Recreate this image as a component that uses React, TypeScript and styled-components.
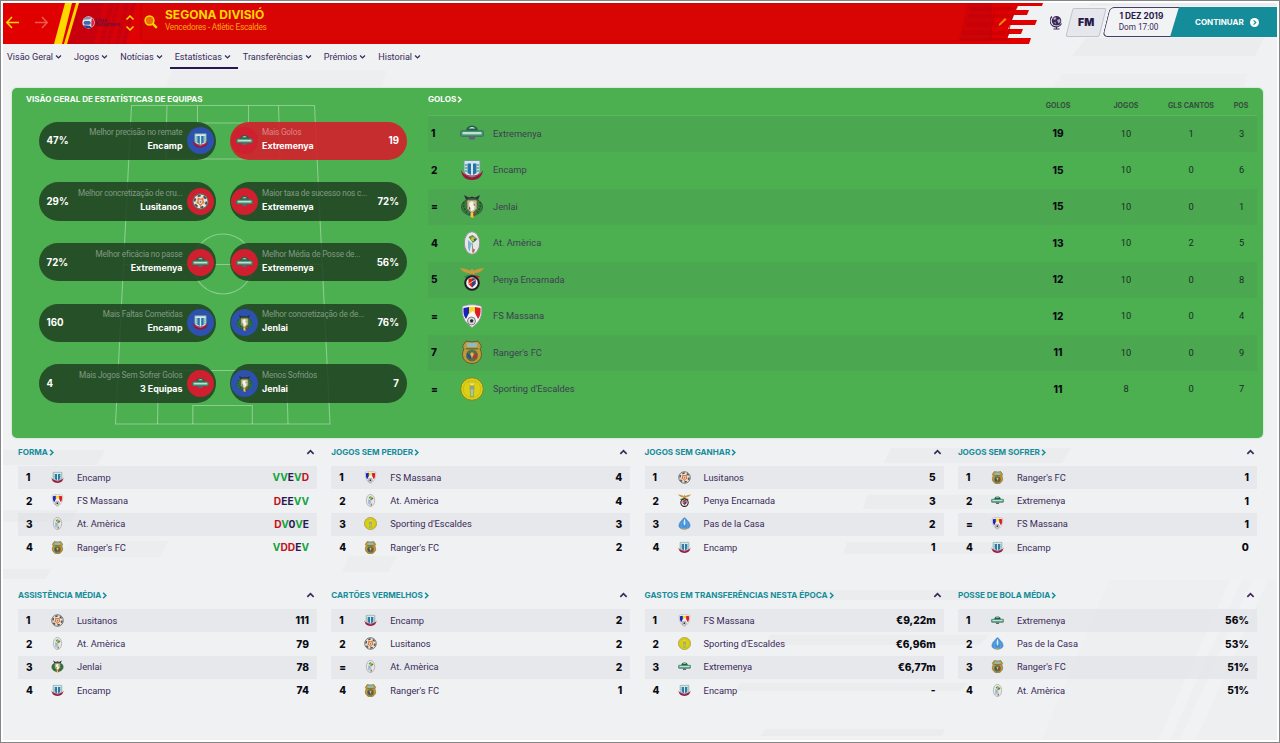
import React from "react";
import styled, { createGlobalStyle, css } from "styled-components";

const Colors = {
  Red: "#e10000",
  Yellow: "#ffd800",
  Green: "#4caf50",
  Teal: "#148c99",
  Purple: "#3b2a58",
  Black: "#0a0a12",
  Background: "#eff1f3",
};

const TEXT_FONT = 'Roboto, "Liberation Sans", sans-serif';
const BOLD_FONT = 'Inter, "Liberation Sans", sans-serif';

type Club =
  | "Extremenya"
  | "Encamp"
  | "Jenlai"
  | "At. Amèrica"
  | "Penya Encarnada"
  | "FS Massana"
  | "Ranger's FC"
  | "Sporting d'Escaldes"
  | "Lusitanos"
  | "Pas de la Casa";

const crests: Record<Club, React.ReactNode> = {
  Extremenya: (
    <>
      <path d="M6 10a6 5.500 0 0 1 12 0z" fill="#1d5f48" />
      <path d="M8.500 7.500a4 3 0 0 1 7 0z" fill="#d9ead9" />
      <rect x=".5" y="9.500" width="23" height="6" rx="1.500" fill="#3f9270" stroke="#3d6f5c" strokeWidth=".7" />
      <rect x="2.500" y="11" width="19" height="2.400" fill="#c3dfce" />
      <path d="M8.500 15.500h7l-1 3h-5z" fill="#625f80" />
    </>
  ),
  Encamp: (
    <>
      <path d="M1 12c1.500 3 2.500 4 5 4h12c2.500 0 3.500-1 5-4-.5 6-4 10-11 10S1.500 18 1 12z" fill="#98173c" />
      <path d="M4 2.500h16v10c0 4-4 5.500-8 6.500-4-1-8-2.500-8-6.500z" fill="#d3e6ea" stroke="#6c9a96" />
      <path d="M7.500 5.500H11V17l-3.500-2zM13 5.500h3.500V15L13 17z" fill="#2674a8" />
      <path d="M6 6v9M18 6v9" stroke="#4aa083" strokeWidth="1.400" strokeDasharray="2 1" />
      <path d="M3 15c2 4 16 4 18 0" stroke="#c02b50" strokeWidth="1" fill="none" />
    </>
  ),
  Jenlai: (
    <>
      <path d="M4 1l5 2.500 3-1 3 1L20 1l-2 5H6z" fill="#2f343a" />
      <ellipse cx="12" cy="13" rx="10.500" ry="8.500" fill="#3a7c42" stroke="#2b5a34" />
      <path d="M4 8c-1 4 0 8 4 11M20 8c1 4 0 8-4 11" stroke="#1f4f2a" strokeWidth="1.500" strokeDasharray="2 1.200" fill="none" />
      <path d="M7 6h10v8.500L12 20l-5-5.500z" fill="#c9bd8e" stroke="#5a5736" strokeWidth=".7" />
      <path d="M9 9l3-2 3 3-1 6-3 1-1-3z" fill="#f4f2ea" />
      <path d="M9 13l1.500 1-1 2zM13.500 9l1.500 2-1 1z" fill="#3f3b33" />
      <path d="M8 19h3v4z" fill="#2547b8" />
      <path d="M10.500 19h3v5l-3-1z" fill="#f5cf1d" />
      <path d="M13.500 19H16l-2.500 4z" fill="#c9222b" />
    </>
  ),
  "At. Amèrica": (
    <>
      <ellipse cx="12" cy="12" rx="7.700" ry="11.300" fill="#e6e8e7" stroke="#93908f" />
      <path d="M8.500 6l4-2 5 4-4.500 4z" fill="#5c9440" />
      <circle cx="13" cy="8" r="2" fill="#dcc436" />
      <path d="M13.500 7.500l3 1-2 2z" fill="#2d5599" />
      <path d="M8 9l3.500 3-2 9-1.500-4z" fill="#7fb4da" />
      <path d="M12 12l1 9" stroke="#858b96" />
      <path d="M13 17.500l2 1-1 3h-2z" fill="#b66d46" />
    </>
  ),
  "Penya Encarnada": (
    <>
      <path d="M0 1c4 0 8 2 10.500 2.500L12 1.500l1.500 2C16 3 20 1 24 1c-2 3-5 5-9 5l-1 2h-4L9 6C5 6 2 4 0 1z" fill="#c99a3c" />
      <path d="M4 9l8-2 2 1-4 3H5z" fill="#2c8d4e" />
      <path d="M13 8l7 1-2 2h-5z" fill="#d02a33" />
      <circle cx="12" cy="16" r="6.800" fill="#f1f1f1" stroke="#1f1c22" strokeWidth="2" />
      <path d="M8.500 11.500h7v5.500L12 20.500 8.500 17z" fill="#d3222d" />
      <path d="M12 11.500h3.500V17L12 20.500z" fill="#39408c" />
      <path d="M8.500 17l7-4.500" stroke="#e8d23c" />
    </>
  ),
  "FS Massana": (
    <>
      <path d="M2.500 2.500c3-1.200 5.500-1.700 9.500-1.700s6.500.500 9.500 1.700c1 8.500-1 15-9.500 21C3.500 17.500 1.500 11 2.500 2.500z" fill="#f7f7f7" stroke="#9a97a4" strokeWidth=".8" />
      <path d="M3.500 4L9 3v6l-3 6C3.500 12 3.200 8 3.500 4z" fill="#1c22b8" />
      <path d="M9 3h6v6l-2.500-2L9 10z" fill="#f1dd25" />
      <path d="M15 3l5.500 1c.3 4 0 8-2.500 11l-3-6z" fill="#e01b22" />
      <circle cx="11.500" cy="17" r="4" fill="#dadada" stroke="#555" strokeWidth=".7" />
      <path d="M10 16l2-1 1.500 1.500-1 2h-2z" fill="#26262c" />
    </>
  ),
  "Ranger's FC": (
    <>
      <path d="M6 1c4 1 8 1 12 0l3.500 5L20 9c4 7-.5 14.500-8 14.500S0 16 4 9L2.500 6z" fill="#bf9a38" stroke="#6c5a28" />
      <path d="M7 3h10v4H7z" fill="#86bccc" />
      <path d="M6 8h12v1.500H6z" fill="#6c6d35" />
      <circle cx="12" cy="15.500" r="6" fill="#5a7046" />
      <path d="M7 12.500l4 2.500v4.500l-3.500-2z" fill="#2c4f91" />
      <path d="M17 12.500L13 15v4.500l3.500-2z" fill="#b23a2c" />
      <path d="M10 14l2-2 2 2-2 4z" fill="#dfb64a" />
    </>
  ),
  "Sporting d'Escaldes": (
    <>
      <circle cx="12" cy="12" r="11.300" fill="#ddd015" stroke="#7f8426" />
      <circle cx="12" cy="12" r="8.700" fill="none" stroke="#c0b416" strokeWidth=".7" />
      <path d="M8.500 4.500l3 1.500h1l3-1.500-1.500 4h-4z" fill="#f1e95a" stroke="#b49b1c" strokeWidth=".5" />
      <path d="M10 9.500h4l-.5 10h-3z" fill="#b5c490" stroke="#6e9a45" strokeWidth=".6" />
      <path d="M10 10h4v2.500h-4z" fill="#8f9cab" />
    </>
  ),
  Lusitanos: (
    <>
      <circle cx="12" cy="12" r="10.700" fill="#e6e4e2" stroke="#6a6462" strokeWidth="1.600" />
      <circle cx="12" cy="12" r="8.300" fill="none" stroke="#55504d" strokeWidth="2.800" strokeDasharray="4.500 4" />
      <path d="M8 6.500l4 1.500 4-1.500.500 5L18 14l-3.500 1.500L12 19l-2.500-3.500L6 14l1.500-2.500z" fill="#e2762a" />
      <path d="M9.500 9.500h5v4.500L12 16l-2.500-2z" fill="#e9dcca" />
      <path d="M11 11h2v3h-2z" fill="#6e87ae" />
    </>
  ),
  "Pas de la Casa": (
    <>
      <path d="M12 1c2.500 1.500 4 3 5 5 4 3 5.500 7 5.500 10.500-1 4-5 6-10.500 6S2.500 21 1.500 17C1.500 13 3 9 7 6c1-2 2.500-3.500 5-5z" fill="#4392dc" stroke="#7d9bb5" />
      <path d="M12 3c2 4 2 8 1 12h-2C10 11 10 7 12 3z" fill="#dcebf7" />
      <path d="M8 9c-3 4-3 8-1 11M16 9c3 4 3 8 1 11" stroke="#7bb6ec" fill="none" />
      <path d="M8 20h8l-1 3H9z" fill="#a9a45a" />
    </>
  ),
};

const Crest = ({ club, size }: { club: Club; size: number }) => (
  <svg width={size} height={size} viewBox="0 0 24 24">
    {crests[club]}
  </svg>
);

const menu = ["Visão Geral", "Jogos", "Notícias", "Estatísticas", "Transferências", "Prémios", "Historial"];

type Stat = { label: string; team: string; club: Club; value: string; bg: "red" | "blue"; active?: boolean };

const leftStats: Stat[] = [
  { label: "Melhor precisão no remate", team: "Encamp", club: "Encamp", value: "47%", bg: "blue" },
  { label: "Melhor concretização de cru...", team: "Lusitanos", club: "Lusitanos", value: "29%", bg: "red" },
  { label: "Melhor eficácia no passe", team: "Extremenya", club: "Extremenya", value: "72%", bg: "red" },
  { label: "Mais Faltas Cometidas", team: "Encamp", club: "Encamp", value: "160", bg: "blue" },
  { label: "Mais Jogos Sem Sofrer Golos", team: "3 Equipas", club: "Extremenya", value: "4", bg: "red" },
];

const rightStats: Stat[] = [
  { label: "Mais Golos", team: "Extremenya", club: "Extremenya", value: "19", bg: "red", active: true },
  { label: "Maior taxa de sucesso nos c...", team: "Extremenya", club: "Extremenya", value: "72%", bg: "red" },
  { label: "Melhor Média de Posse de...", team: "Extremenya", club: "Extremenya", value: "56%", bg: "red" },
  { label: "Melhor concretização de de...", team: "Jenlai", club: "Jenlai", value: "76%", bg: "blue" },
  { label: "Menos Sofridos", team: "Jenlai", club: "Jenlai", value: "7", bg: "blue" },
];

const goals: [string, Club, number, number, number, number][] = [
  ["1", "Extremenya", 19, 10, 1, 3],
  ["2", "Encamp", 15, 10, 0, 6],
  ["=", "Jenlai", 15, 10, 0, 1],
  ["4", "At. Amèrica", 13, 10, 2, 5],
  ["5", "Penya Encarnada", 12, 10, 0, 8],
  ["=", "FS Massana", 12, 10, 0, 4],
  ["7", "Ranger's FC", 11, 10, 0, 9],
  ["=", "Sporting d'Escaldes", 11, 8, 0, 7],
];

type Ranking = { title: string; form?: boolean; rows: [string, Club, string][] };

const rankings: Ranking[] = [
  {
    title: "FORMA",
    form: true,
    rows: [["1", "Encamp", "VVEVD"], ["2", "FS Massana", "DEEVV"], ["3", "At. Amèrica", "DV0VE"], ["4", "Ranger's FC", "VDDEV"]],
  },
  {
    title: "JOGOS SEM PERDER",
    rows: [["1", "FS Massana", "4"], ["2", "At. Amèrica", "4"], ["3", "Sporting d'Escaldes", "3"], ["4", "Ranger's FC", "2"]],
  },
  {
    title: "JOGOS SEM GANHAR",
    rows: [["1", "Lusitanos", "5"], ["2", "Penya Encarnada", "3"], ["3", "Pas de la Casa", "2"], ["4", "Encamp", "1"]],
  },
  {
    title: "JOGOS SEM SOFRER",
    rows: [["1", "Ranger's FC", "1"], ["2", "Extremenya", "1"], ["=", "FS Massana", "1"], ["4", "Encamp", "0"]],
  },
  {
    title: "ASSISTÊNCIA MÉDIA",
    rows: [["1", "Lusitanos", "111"], ["2", "At. Amèrica", "79"], ["3", "Jenlai", "78"], ["4", "Encamp", "74"]],
  },
  {
    title: "CARTÕES VERMELHOS",
    rows: [["1", "Encamp", "2"], ["2", "Lusitanos", "2"], ["=", "At. Amèrica", "2"], ["4", "Ranger's FC", "1"]],
  },
  {
    title: "GASTOS EM TRANSFERÊNCIAS NESTA ÉPOCA",
    rows: [["1", "FS Massana", "€9,22m"], ["2", "Sporting d'Escaldes", "€6,96m"], ["3", "Extremenya", "€6,77m"], ["4", "Encamp", "-"]],
  },
  {
    title: "POSSE DE BOLA MÉDIA",
    rows: [["1", "Extremenya", "56%"], ["2", "Pas de la Casa", "53%"], ["3", "Ranger's FC", "51%"], ["4", "At. Amèrica", "51%"]],
  },
];

const Chevron = ({ dir, size = 7, width = 1.6 }: { dir: "up" | "down" | "right"; size?: number; width?: number }) => {
  const d = { up: "M1.500 6.500L5 3l3.500 3.500", down: "M1.500 3.500L5 7l3.500-3.500", right: "M3 1L7 5 3 9" }[dir];
  return (
    <svg width={size} height={size} viewBox="0 0 10 10">
      <path d={d} fill="none" stroke="currentColor" strokeWidth={(width * 10) / size} />
    </svg>
  );
};

const PageBackdrop = () => (
  <Backdrop width="1274" height="737" viewBox="3 3 1274 737">
    <g fill="#ebecee">
      <path d="M1090 3h187v3H1089zM1086 38h178l-9 18H1072z" />
      <path d="M1062 74h186l-5 14h-190z" opacity=".6" />
      <path d="M172 70h214l-5 18H166z" opacity=".5" />
      <path d="M3 450h102l-8 15H3zM3 510h75l-7 12H3zM3 569h48l-6 10H3z" />
      <path d="M70 541h98l-8 16H60zM349 556h48l-9 16h-46z" opacity=".8" />
      <path d="M891 448h180l-9 15H884zM867 495h190l-7 14H863zM847 542h190l-5 12H843z" />
      <path d="M800 590h210l-6 10H795zM770 635h218l-8 10H766zM740 683h228l-7 8H736zM765 729h180l-3 7H760z" />
      <path d="M1042 740l68-160h167v160z" opacity=".55" />
    </g>
    <g fill="#f1f2f4">
      <path d="M1158 740l72-160h12l-72 160zM1180 740l72-160h16l-72 160z" />
    </g>
  </Backdrop>
);

const HeaderArt = () => (
  <ArtSvg width="1050" height="41" viewBox="3 3 1050 41">
    <path
      d="M3 3h1040l-1 3h-24l-2 4h13l-2 5h-13l-2 5h25l-2 5h-25l-2 4h15l-2 5h-12l-2 4h24l-2 6H3z"
      fill={Colors.Red}
    />
    <path d="M79 3h62v41H68z" fill="#c8000d" />
    <g fill="#df0205">
      <path d="M94 44L104 3h5L99 44zM104 44L114 3h2l-10 41zM110 44L120 3h5l-10 41zM119 44L129 3h3l-10 41z" opacity=".6" />
      <path d="M126 44l10-41h5v41z" />
    </g>
    <path d="M141 3h850v36a2 2 0 0 1-2 2H143a2 2 0 0 1-2-2z" fill="#d90404" stroke="#bd0007" strokeWidth=".8" />
    <g fill="#bd0209">
      <path d="M971 7h42l-1 4h-43zM969 14h44l-1 4h-44zM967 22h38l-2 5h-37zM963 31h43l-1 4h-43zM960 38h50l-1 3h-50z" opacity=".5" />
      <path d="M968 3h23v38h-32z" opacity=".35" />
    </g>
    <path d="M995 8h19l-7 31h-17z" fill="none" stroke="#ba0007" strokeWidth=".8" />
    <path d="M65 3h7L62 44h-8z" fill={Colors.Yellow} />
    <path d="M76 3h3L67 44h-3z" fill={Colors.Yellow} />
    <path d="M998.500 26l.7-2.300 5.800-5.700 1.500 1.400-5.800 5.700z" fill="#f58a07" />
  </ArtSvg>
);

const Arrow = ({ flip }: { flip?: boolean }) => (
  <svg width="13" height="13" viewBox="0 0 13 13">
    <path
      d={flip ? "M0 6.500h12M7 1l5.200 5.500L7 12" : "M13 6.500H1M6 1L.8 6.500 6 12"}
      fill="none"
      stroke={flip ? "#ee5a4c" : Colors.Yellow}
      strokeWidth="1.500"
    />
  </svg>
);

const LeagueLogo = () => (
  <svg width="13" height="13" viewBox="0 0 12 12">
    <circle cx="6" cy="6" r="5.700" fill="#e4e6ef" />
    <path d="M1 3.500a5.700 5.700 0 0 1 8-2L7 3z" fill="#8b8ba6" />
    <path d="M9 1.500a5.700 5.700 0 0 1 0 9L8.500 8z" fill="#e21f31" />
    <path d="M1 8.500a5.700 5.700 0 0 0 8 2L7 9z" fill="#27458e" />
    <rect x="1.500" y="4.500" width="6.500" height="3.500" rx="1.500" fill="#4068aa" />
  </svg>
);

const Globe = () => (
  <svg width="13" height="15" viewBox="0 0 13 15">
    <circle cx="6.500" cy="5.800" r="4.800" fill={Colors.Purple} />
    <path d="M3 4l2-2 1.500 1L5 5zM7 5l3-1 .5 2.500-2 2zM4 7l2 .5L5.500 9z" fill="#b5b1c3" />
    <path d="M2 1.500a6 6 0 1 0 9.500 7M6.500 11.500V14M3.500 14h6" fill="none" stroke={Colors.Purple} strokeWidth="1.100" />
  </svg>
);

const Pitch = () => (
  <PitchSvg width="218" height="322" viewBox="114 104 218 322">
    <g fill="none" stroke="#fff" strokeOpacity=".36" strokeWidth="1.100">
      <path d="M131.500 105.500h183L330 424H115.500z" />
      <path d="M167 105.500L165.500 159h114.500L278.500 105.500M197.500 105.500V123h51v-17.500" />
      <path d="M123.500 264.500h198" />
      <circle cx="223" cy="264" r="30" />
      <path d="M157.500 424l1-53.500h128l1.500 53.500M192.800 424v-18.500h59.500V424" />
    </g>
  </PitchSvg>
);

const StatPill = ({ stat, right }: { stat: Stat; right?: boolean }) => (
  <Pill $right={right} $active={stat.active}>
    <PillValue>{stat.value}</PillValue>
    <PillText $right={right}>
      <PillLabel>{stat.label}</PillLabel>
      <PillTeam>{stat.team}</PillTeam>
    </PillText>
    <Badge $color={stat.bg}>
      <Crest club={stat.club} size={17} />
    </Badge>
  </Pill>
);

const App = () => {
  return (
    <Window>
      <GlobalStyle />
      <PageBackdrop />
      <Header>
        <HeaderArt />
        <History>
          <Arrow />
          <Arrow flip />
        </History>
        <League>
          <LeagueLogo />
          <LeagueName>
            Lliga
            <br />
            Biosphere
          </LeagueName>
        </League>
        <Switcher>
          <Chevron dir="up" size={10} width={1.500} />
          <Chevron dir="down" size={10} width={1.500} />
        </Switcher>
        <svg width="14" height="14" viewBox="0 0 14 14">
          <path d="M8.500 8.500l4.300 4.300" stroke={Colors.Yellow} strokeWidth="2.400" />
          <circle cx="5.500" cy="5.500" r="4.400" fill="#ef6b05" stroke={Colors.Yellow} strokeWidth="1.500" />
        </svg>
        <Heading>
          <Title>SEGONA DIVISIÓ</Title>
          <Subtitle>Vencedores - Atlètic Escaldes</Subtitle>
        </Heading>
        <Globe />
        <FmButton>
          <span>FM</span>
        </FmButton>
        <DateBox>
          <b>1 DEZ 2019</b>
          <span>Dom 17:00</span>
        </DateBox>
        <Continue>
          CONTINUAR
          <svg width="9" height="9" viewBox="0 0 9 9">
            <circle cx="4.500" cy="4.500" r="4.500" fill="#fff" />
            <path d="M3.600 2.300l2.200 2.200-2.200 2.200" fill="none" stroke={Colors.Teal} strokeWidth="1.200" />
          </svg>
        </Continue>
      </Header>
      <Menu>
        {menu.map((item) => (
          <MenuItem key={item} $active={item === "Estatísticas"}>
            {item}
            <Chevron dir="down" size={7} width={1.300} />
          </MenuItem>
        ))}
      </Menu>
      <Panel>
        <Overview>
          <Pitch />
          <PanelTitle>VISÃO GERAL DE ESTATÍSTICAS DE EQUIPAS</PanelTitle>
          <Pills>
            {leftStats.map((stat, i) => (
              <React.Fragment key={stat.label}>
                <StatPill stat={stat} />
                <StatPill stat={rightStats[i]} right />
              </React.Fragment>
            ))}
          </Pills>
        </Overview>
        <Goals>
          <GoalsHead>
            <GoalsTitle>
              GOLOS
              <Chevron dir="right" size={7} width={1.600} />
            </GoalsTitle>
            <Column>GOLOS</Column>
            <Column>JOGOS</Column>
            <Column>GLS CANTOS</Column>
            <Column $last>POS</Column>
          </GoalsHead>
          {goals.map(([rank, club, total, games, corners, pos]) => (
            <GoalsRow key={club}>
              <GoalRank>{rank}</GoalRank>
              <Crest club={club} size={24} />
              <GoalClub>{club}</GoalClub>
              <Total>{total}</Total>
              <Cell>{games}</Cell>
              <Cell>{corners}</Cell>
              <Cell $last>{pos}</Cell>
            </GoalsRow>
          ))}
        </Goals>
      </Panel>
      <Rankings>
        {rankings.map(({ title, form, rows }) => (
          <Card key={title}>
            <CardHead>
              <CardTitle>
                {title}
                <Chevron dir="right" size={7} width={1.500} />
              </CardTitle>
              <Chevron dir="up" size={9} width={1.700} />
            </CardHead>
            {rows.map(([rank, club, value]) => (
              <CardRow key={club}>
                <Rank>{rank}</Rank>
                <Crest club={club} size={13} />
                <ClubName>{club}</ClubName>
                <Value>
                  {form
                    ? value.split("").map((result, i) => (
                        <Result key={i} $result={result}>
                          {result}
                        </Result>
                      ))
                    : value}
                </Value>
              </CardRow>
            ))}
          </Card>
        ))}
      </Rankings>
    </Window>
  );
};

export default App;

const GlobalStyle = createGlobalStyle`
  body {
    margin: 0;
    font-family: ${TEXT_FONT};
    color: ${Colors.Purple};
  }
  * {
    box-sizing: border-box;
  }
  svg {
    display: block;
    flex: none;
  }
`;

const Window = styled.div`
  position: relative;
  z-index: 0;
  width: 1280px;
  height: 743px;
  overflow: hidden;
  background: ${Colors.Background};
  border: 1px solid #858585;
  box-shadow: inset 0 0 0 2px #fff;
  padding: 2px;
`;

const Backdrop = styled.svg`
  position: absolute;
  left: 2px;
  top: 2px;
  z-index: -2;
`;

const Header = styled.div`
  position: relative;
  display: flex;
  align-items: center;
  height: 41px;
  padding-bottom: 3px;
`;

const ArtSvg = styled.svg`
  position: absolute;
  left: 0;
  top: 0;
  z-index: -1;
`;

const History = styled.div`
  display: flex;
  gap: 16px;
  width: 79px;
  padding-left: 3px;
`;

const League = styled.div`
  display: flex;
  align-items: center;
  width: 43px;
`;

const LeagueName = styled.div`
  font-family: ${BOLD_FONT};
  font-size: 5px;
  font-weight: 700;
  line-height: 4px;
  color: #6d1038;
`;

const Switcher = styled.div`
  display: flex;
  flex-direction: column;
  width: 19px;
  padding-top: 1px;
  color: ${Colors.Yellow};
`;

const Heading = styled.div`
  flex: 1;
  padding: 0 0 4px 7px;
`;

const Title = styled.div`
  font-family: ${BOLD_FONT};
  font-size: 12px;
  font-weight: 700;
  line-height: 13px;
  color: ${Colors.Yellow};
`;

const Subtitle = styled.div`
  font-size: 8.300px;
  line-height: 12px;
  letter-spacing: -0.250px;
  color: #fba60c;
`;

const FmButton = styled.div`
  display: flex;
  align-items: center;
  justify-content: center;
  width: 34px;
  height: 29px;
  margin: 0 3px 0 6px;
  border: 1px solid #c3c2cb;
  border-radius: 2px;
  background: #e6e7ec;
  color: #2a1a4a;
  font-family: ${BOLD_FONT};
  font-size: 10.500px;
  font-weight: 900;
  transform: skewX(-14deg);
  span {
    transform: skewX(14deg);
  }
`;

const DateBox = styled.div`
  display: flex;
  flex-direction: column;
  align-items: center;
  justify-content: center;
  width: 72px;
  height: 30px;
  padding: 0 5px 1px 0;
  border: 1.500px solid #4a3a66;
  border-right: 0;
  border-radius: 5px 0 0 5px;
  transform: skewX(-14deg);
  background: #f2f3f5;
  line-height: 10.500px;
  b,
  span {
    transform: skewX(14deg);
  }
  b {
    font-family: ${BOLD_FONT};
    font-size: 8.300px;
    color: #2a1a4a;
  }
  span {
    font-size: 8.200px;
  }
`;

const Continue = styled.div`
  display: flex;
  align-items: center;
  gap: 6px;
  width: 107px;
  height: 30px;
  margin-left: -8px;
  padding-left: 25px;
  clip-path: polygon(9px 0, 100% 0, 100% 100%, 0 100%);
  background: ${Colors.Teal};
  color: #fff;
  z-index: 1;
  font-family: ${BOLD_FONT};
  font-size: 8px;
  font-weight: 700;
`;

const Menu = styled.div`
  display: flex;
  height: 44px;
  margin-left: -1px;
`;

const MenuItem = styled.div<{ $active?: boolean }>`
  display: flex;
  align-items: center;
  gap: 2px;
  height: 25px;
  padding: 2px 7px 0 5px;
  font-size: 9.100px;
  letter-spacing: -0.010px;
  border-bottom: 2px solid ${(p) => (p.$active ? "#2a1650" : "transparent")};
`;

const Panel = styled.div`
  display: flex;
  height: 350px;
  margin: 0 14px 0 9px;
  border-radius: 5px;
  background: ${Colors.Green};
  box-shadow: 0 0 1px 1px #d5ead8;
`;

const boldCaps = css`
  font-family: ${BOLD_FONT};
  font-weight: 700;
  font-size: 8.100px;
`;

const Overview = styled.div`
  position: relative;
  width: 416px;
`;

const PitchSvg = styled.svg`
  position: absolute;
  left: 102px;
  top: 16px;
`;

const PanelTitle = styled.div`
  ${boldCaps}
  height: 33.500px;
  padding: 6px 0 0 14px;
  line-height: 10px;
  color: #fff;
`;

const Pills = styled.div`
  position: relative;
  display: grid;
  grid-template-columns: 177px 177px;
  grid-auto-rows: 38.500px;
  gap: 22.200px 14px;
  padding-left: 26.500px;
`;

const Pill = styled.div<{ $right?: boolean; $active?: boolean }>`
  display: flex;
  flex-direction: ${(p) => (p.$right ? "row-reverse" : "row")};
  align-items: center;
  padding: ${(p) => (p.$right ? "0 7.500px 0 1.500px" : "0 1.500px 0 8px")};
  border-radius: 20px;
  background: ${(p) => (p.$active ? "rgba(208, 36, 45, 0.93)" : "rgba(32, 67, 34, 0.87)")};
  color: #fff;
`;

const PillValue = styled.div`
  font-family: ${BOLD_FONT};
  font-size: 9.700px;
  font-weight: 700;
`;

const PillText = styled.div<{ $right?: boolean }>`
  flex: 1;
  padding: ${(p) => (p.$right ? "0 0 3px 4px" : "0 4.500px 3px 0")};
  text-align: ${(p) => (p.$right ? "left" : "right")};
  white-space: nowrap;
`;

const PillLabel = styled.div`
  font-size: 8.200px;
  line-height: 13px;
  letter-spacing: -0.180px;
  color: rgba(255, 255, 255, 0.42);
`;

const PillTeam = styled.div`
  font-family: ${BOLD_FONT};
  font-size: 8.900px;
  font-weight: 700;
  line-height: 13px;
`;

const Badge = styled.div<{ $color: "red" | "blue" }>`
  display: flex;
  align-items: center;
  justify-content: center;
  width: 27px;
  height: 27px;
  border-radius: 50%;
  background: ${(p) => (p.$color === "red" ? "#d01f2e" : "#2d51ae")};
`;

const Goals = styled.div`
  flex: 1;
  padding-right: 6px;
`;

const goalsGrid = css`
  display: grid;
  align-items: center;
`;

const GoalsHead = styled.div`
  ${goalsGrid}
  grid-template-columns: 1fr 60px 76px 54px 39px;
  height: 27.500px;
  border-bottom: 1px solid #5cb660;
`;

const GoalsTitle = styled.div`
  ${boldCaps}
  display: flex;
  align-items: center;
  align-self: start;
  padding-top: 6px;
  line-height: 10px;
  color: #fff;
`;

const Column = styled.div<{ $last?: boolean }>`
  ${boldCaps}
  font-size: 7.100px;
  padding: 8px 0 0 ${(p) => (p.$last ? "7px" : 0)};
  text-align: center;
  white-space: nowrap;
  color: #34503f;
`;

const GoalsRow = styled.div`
  ${goalsGrid}
  grid-template-columns: 32px 33px 1fr 60px 76px 54px 39px;
  height: 36.500px;
  padding-bottom: 1px;
  font-size: 9.300px;
  &:nth-child(even) {
    background: #4ca850;
  }
`;

const Rank = styled.div`
  font-family: ${BOLD_FONT};
  font-size: 10px;
  font-weight: 800;
  color: ${Colors.Black};
`;

const GoalRank = styled(Rank)`
  padding-left: 3px;
`;

const GoalClub = styled.div`
  color: #3f3d54;
`;

const Total = styled.div`
  font-family: ${BOLD_FONT};
  font-size: 10px;
  font-weight: 800;
  text-align: center;
  color: ${Colors.Black};
`;

const Cell = styled.div<{ $last?: boolean }>`
  padding-left: ${(p) => (p.$last ? "8px" : 0)};
  text-align: center;
  color: #1b2c26;
`;

const Rankings = styled.div`
  display: grid;
  grid-template-columns: repeat(4, 299px);
  grid-auto-rows: 143px;
  column-gap: 14.300px;
  padding-left: 15px;
`;

const Card = styled.div`
  color: ${Colors.Purple};
`;

const CardHead = styled.div`
  display: flex;
  align-items: center;
  justify-content: space-between;
  height: 28px;
  padding-right: 2px;
`;

const CardTitle = styled.div`
  ${boldCaps}
  display: flex;
  align-items: center;
  color: ${Colors.Teal};
`;

const CardRow = styled.div`
  display: grid;
  grid-template-columns: 25px 26px 1fr auto;
  align-items: center;
  height: 23.400px;
  padding: 0 8px 1px;
  font-size: 9.300px;
  &:nth-child(even) {
    background: rgba(222, 224, 228, 0.550);
  }
`;

const ClubName = styled.div``;

const Value = styled.div`
  font-family: ${BOLD_FONT};
  font-size: 10.200px;
  font-weight: 800;
  color: ${Colors.Black};
`;

const resultColors: Record<string, string> = { V: "#12a53c", D: "#c4101c" };

const Result = styled.span<{ $result: string }>`
  font-weight: 700;
  color: ${(p) => resultColors[p.$result] || "#2a1a50"};
`;
